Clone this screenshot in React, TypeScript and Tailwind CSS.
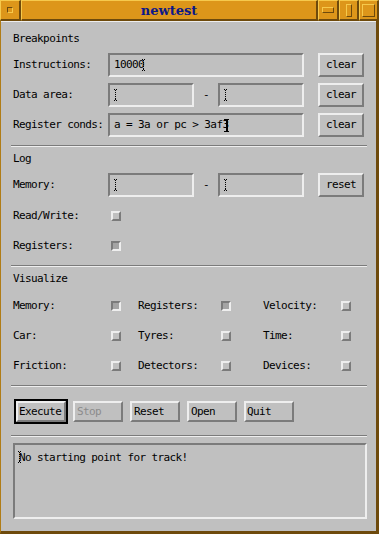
import type { ReactNode } from "react";

const sunken =
  "border-2 border-t-[#7b7b7b] border-l-[#7b7b7b] border-b-[#eeeeee] border-r-[#eeeeee]";
const raised =
  "border-2 border-t-[#eeeeee] border-l-[#eeeeee] border-b-[#7b7b7b] border-r-[#7b7b7b]";
const goldBevel =
  "border-t border-l border-b-2 border-r-2 border-t-[#f6c94c] border-l-[#f6c94c] border-b-[#6e4a0c] border-r-[#6e4a0c] bg-[#dd961a]";

function StippleCursor() {
  const dots = [
    [1, 0], [3, 0], [2, 1], [2, 3], [2, 5], [2, 7], [2, 9], [2, 10], [1, 11], [3, 11],
  ];
  return (
    <svg width="5" height="12" viewBox="0 0 5 12" className="block shrink-0">
      {dots.map(([x, y], i) => (
        <rect key={i} x={x} y={y} width="1" height="1" fill="#000" />
      ))}
    </svg>
  );
}

function SolidCursor() {
  return (
    <svg width="5" height="13" viewBox="0 0 5 13" className="block shrink-0">
      <rect x="0" y="0" width="5" height="1" fill="#000" />
      <rect x="2" y="0" width="2" height="13" fill="#000" />
      <rect x="0" y="12" width="5" height="1" fill="#000" />
    </svg>
  );
}

function TitleBar() {
  return (
    <div className="flex h-[21px] shrink-0">
      <div className={`w-[21px] h-full flex items-center justify-center ${goldBevel}`}>
        <div className="w-[6px] h-[6px] border border-t-[#6e4a0c] border-l-[#6e4a0c] border-b-[#f6c94c] border-r-[#f6c94c]" />
      </div>
      <div className={`w-[297px] h-full flex items-center justify-center ${goldBevel}`}>
        <span className="font-['DejaVu_Serif',serif] font-bold text-[13px] tracking-normal leading-none text-[#0c1888]">
          newtest
        </span>
      </div>
      <div className={`w-[21px] h-full flex items-center justify-center ${goldBevel}`}>
        <div className="w-[12px] h-[6px] border border-t-[#f6c94c] border-l-[#f6c94c] border-b-[#6e4a0c] border-r-[#6e4a0c]" />
      </div>
      <div className={`w-[20px] h-full flex items-center justify-center ${goldBevel}`}>
        <div className="w-[6px] h-[13px] border border-t-[#f6c94c] border-l-[#f6c94c] border-b-[#6e4a0c] border-r-[#6e4a0c]" />
      </div>
      <div className={`w-[20px] h-full flex items-center justify-center ${goldBevel}`}>
        <div className="w-[13px] h-[13px] border border-t-[#f6c94c] border-l-[#f6c94c] border-b-[#6e4a0c] border-r-[#6e4a0c]" />
      </div>
    </div>
  );
}

function Heading({ children, className = "" }: { children: ReactNode; className?: string }) {
  return <div className={`h-[16px] flex items-center pl-[2px] ${className}`}>{children}</div>;
}

function Separator({ className = "" }: { className?: string }) {
  return (
    <div className={`w-[356px] h-[2px] border-t border-b border-t-[#7b7b7b] border-b-[#eeeeee] ${className}`} />
  );
}

function Field({ width, children }: { width: string; children?: ReactNode }) {
  return (
    <div className={`${width} h-[24px] flex items-center pl-[3px] whitespace-pre ${sunken}`}>
      {children ?? <StippleCursor />}
    </div>
  );
}

function SideButton({ children }: { children: ReactNode }) {
  return (
    <div className={`ml-[14px] w-[46px] h-[24px] flex items-center justify-center ${raised}`}>
      {children}
    </div>
  );
}

function Check({ on = false }: { on?: boolean }) {
  return (
    <div
      className={
        on
          ? `w-[10px] h-[10px] bg-[#a4a4a4] ${sunken}`
          : `w-[10px] h-[10px] bg-[#c0c0c0] ${raised}`
      }
    />
  );
}

function Range() {
  return (
    <>
      <Field width="w-[86px]" />
      <div className="w-[24px] text-center">-</div>
      <Field width="w-[86px]" />
    </>
  );
}

function ActionButton({ children, disabled = false, className = "" }: { children: ReactNode; disabled?: boolean; className?: string }) {
  return (
    <div
      className={`w-[50px] h-[21px] flex items-center pl-[1px] ${raised} ${disabled ? "text-[#8c8c8c]" : ""} ${className}`}
    >
      {children}
    </div>
  );
}

const visualize: [string, boolean][][] = [
  [["Memory:", true], ["Registers:", true], ["Velocity:", false]],
  [["Car:", false], ["Tyres:", false], ["Time:", false]],
  [["Friction:", false], ["Detectors:", false], ["Devices:", false]],
];

export default function App() {
  return (
    <div className="w-[379px] h-[534px] flex flex-col bg-[#c0c0c0] text-black font-['DejaVu_Sans_Mono',monospace] text-[11px] leading-[14px] tracking-[-0.6px]">
      <TitleBar />
      <div className="flex-1 flex flex-col border-l border-r-[3px] border-b-[3px] border-l-[#b07c16] border-r-[#6e4a0c] border-b-[#6e4a0c]">
        <div className="flex-1 flex flex-col border-t border-t-[#eeeeee] pl-[10px] pt-[9px]">
          <Heading>Breakpoints</Heading>
          <div className="mt-[6px] flex flex-col gap-[6px] pl-[2px]">
            <div className="flex items-center h-[24px]">
              <div className="w-[95px]">Instructions:</div>
              <Field width="w-[196px]">
                <span className="pl-[1px]">10000</span>
                <span className="-ml-[3px]">
                  <StippleCursor />
                </span>
              </Field>
              <SideButton>clear</SideButton>
            </div>
            <div className="flex items-center h-[24px]">
              <div className="w-[95px]">Data area:</div>
              <Range />
              <SideButton>clear</SideButton>
            </div>
            <div className="flex items-center h-[24px]">
              <div className="w-[95px]">Register conds:</div>
              <Field width="w-[196px]">
                <span className="pl-[1px]">a = 3a or pc &gt; 3af3</span>
                <span className="-ml-[4px]">
                  <SolidCursor />
                </span>
              </Field>
              <SideButton>clear</SideButton>
            </div>
          </div>

          <Separator className="mt-[8px]" />
          <Heading className="mt-[4px]">Log</Heading>
          <div className="mt-[6px] pl-[2px] flex items-center h-[24px]">
            <div className="w-[95px]">Memory:</div>
            <Range />
            <SideButton>reset</SideButton>
          </div>
          <div className="mt-[4px] pl-[2px] flex flex-col">
            <div className="h-[30px] flex items-center">
              <div className="w-[98px]">Read/Write:</div>
              <Check />
            </div>
            <div className="h-[30px] flex items-center">
              <div className="w-[98px]">Registers:</div>
              <Check on />
            </div>
          </div>

          <Separator className="mt-[4px]" />
          <Heading className="mt-[4px]">Visualize</Heading>
          <div className="mt-[4px] pl-[2px] flex flex-col">
            {visualize.map((row, r) => (
              <div key={r} className="h-[30px] flex items-center">
                <div className="w-[125px] flex items-center">
                  <div className="w-[98px]">{row[0][0]}</div>
                  <Check on={row[0][1]} />
                </div>
                <div className="w-[125px] flex items-center">
                  <div className="w-[83px]">{row[1][0]}</div>
                  <Check on={row[1][1]} />
                </div>
                <div className="flex items-center">
                  <div className="w-[78px]">{row[2][0]}</div>
                  <Check on={row[2][1]} />
                </div>
              </div>
            ))}
          </div>

          <Separator className="mt-[4px]" />
          <div className="mt-[12px] h-[25px] pl-[3px] flex items-center">
            <div className="w-[54px] h-[25px] border-2 border-black">
              <ActionButton>Execute</ActionButton>
            </div>
            <ActionButton disabled className="ml-[5px] pl-[2px]">
              Stop
            </ActionButton>
            <ActionButton className="ml-[7px] pl-[2px]">Reset</ActionButton>
            <ActionButton className="ml-[7px] pl-[2px]">Open</ActionButton>
            <ActionButton className="ml-[7px] pl-[1px]">Quit</ActionButton>
          </div>

          <Separator className="mt-[11px]" />
          <div className={`mt-[6px] ml-[2px] w-[354px] h-[76px] pt-[6px] pl-[2px] flex items-start ${sunken}`}>
            <StippleCursor />
            <span className="-ml-[3px]">No starting point for track!</span>
          </div>
        </div>
      </div>
    </div>
  );
}
